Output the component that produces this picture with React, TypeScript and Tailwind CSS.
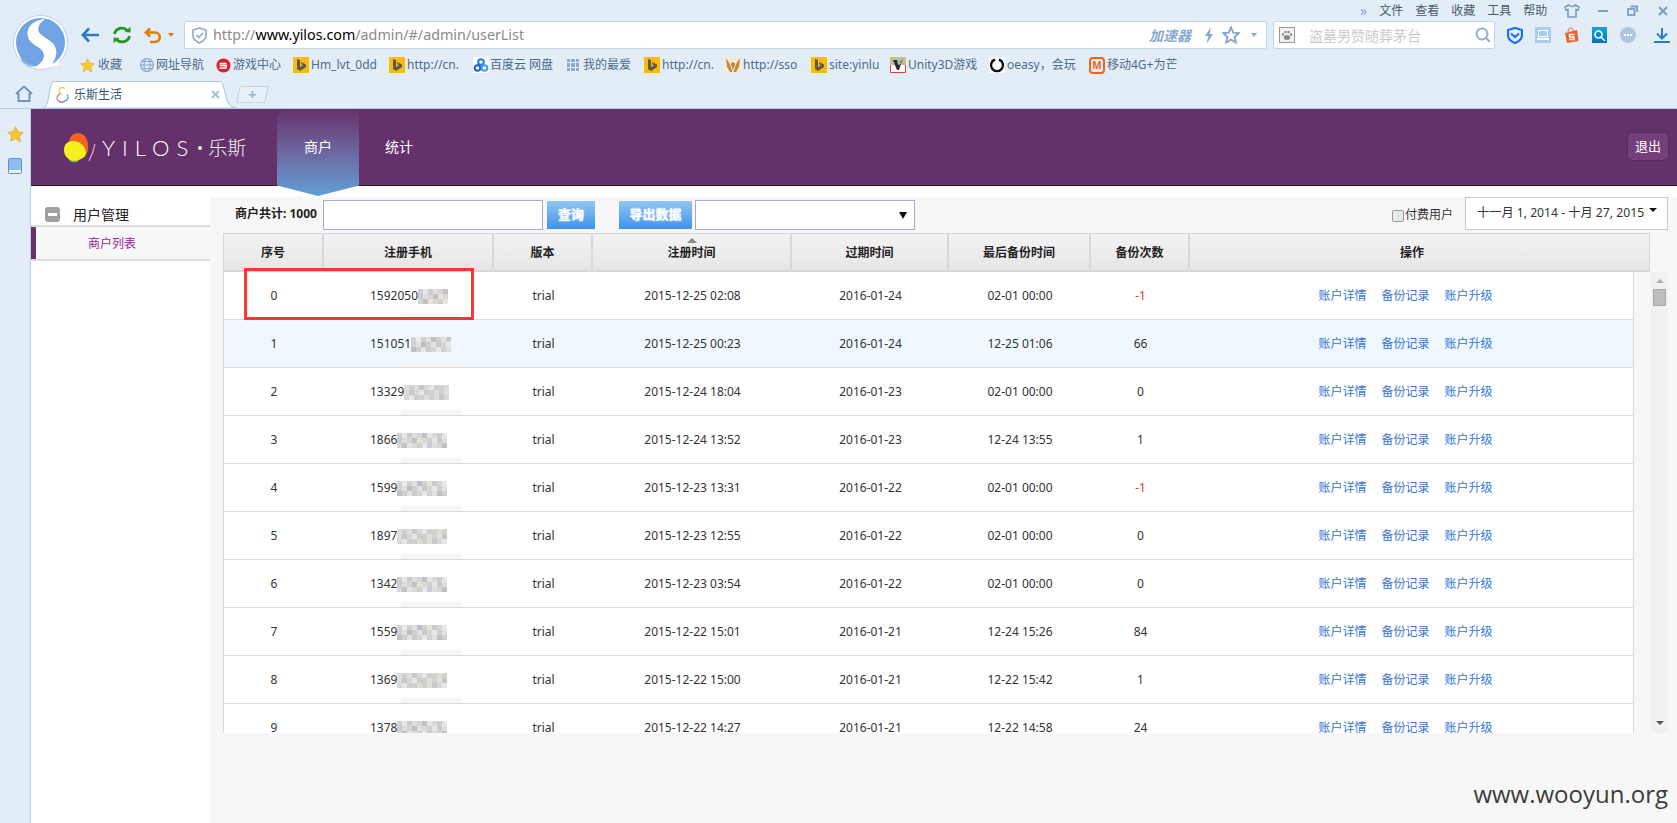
import React from "react";

const font = "font-['Noto_Sans','Noto_Sans_CJK_SC',sans-serif]";

const SLogo = () => (
  <svg width="55" height="55" viewBox="0 0 55 55">
    <circle cx="27.5" cy="27.5" r="27" fill="#fff" stroke="#b9d0ec" />
    <circle cx="27.5" cy="27.5" r="24.5" fill="#6fa3e4" />
    <path d="M35 3.5C24 4 15 9 14.5 18c-.5 9 8 12 13 16 4 3.500 4.500 8 1.500 12-2 3-5 5-8 6.500 13 3 25-3 25-3-1-1 0-12-1-14-2-8-13-12-18-17-3-3-2-8 2-12 2-2 4-3 7-4z" fill="#fff" />
    <path d="M6 38c3 7 8 11 15 14-3 0-8-2-11-5-2-2-3-6-4-9z" fill="#6fa3e4" />
    <path d="M43 13c5 5 8 11 7 19-1 9-5 14-11 17 5-7 6-14 1-21-3-5-4-10 3-15z" fill="#6fa3e4" />
  </svg>
);

const BingIcon = () => (
  <span className="flex h-[16px] w-[16px] shrink-0 items-center justify-center bg-[#ffb900]">
    <svg width="12" height="14" viewBox="0 0 12 14">
      <path d="M2 1l3 1v7l3-1.500-1.500-1L6 4l5 2.500v2.500L5 13l-3-2z" fill="#5a5a5a" />
    </svg>
  </span>
);

const StarIcon = ({ size = 15 }: { size?: number }) => (
  <svg width={size} height={size} viewBox="0 0 24 24" className="shrink-0">
    <path d="M12 1l3.400 7.200 7.600 1-5.600 5.400 1.500 7.900L12 18l-6.900 3.500 1.500-7.900L1 9.200l7.600-1z" fill="#fbc73a" stroke="#e8a320" strokeWidth="1" />
  </svg>
);

const GlobeIcon = () => (
  <svg width="16" height="16" viewBox="0 0 16 16" fill="none" stroke="#8fa8c8" strokeWidth="1.200" className="shrink-0">
    <circle cx="8" cy="8" r="6.500" />
    <ellipse cx="8" cy="8" rx="3" ry="6.500" />
    <path d="M1.500 8h13M2.500 4.500h11M2.500 11.500h11" />
  </svg>
);

const SogouIcon = () => (
  <svg width="15" height="15" viewBox="0 0 15 15" className="shrink-0">
    <circle cx="7.500" cy="7.500" r="7" fill="#d9202a" />
    <path d="M3.500 5.500h7M3.500 7.500h7l-.5 2.500h-6.500" fill="none" stroke="#fff" strokeWidth="1.400" />
  </svg>
);

const BaiduIcon = () => (
  <svg width="16" height="16" viewBox="0 0 16 16" fill="none" strokeWidth="2" className="shrink-0">
    <rect width="16" height="16" fill="#fff" />
    <circle cx="8" cy="5" r="2.800" stroke="#2c7be5" />
    <circle cx="4.500" cy="11" r="2.800" stroke="#1f5fc9" />
    <circle cx="11.500" cy="11" r="2.800" stroke="#38a0f0" />
  </svg>
);

const GridIcon = () => (
  <span className="grid h-[12px] w-[12px] shrink-0 grid-cols-3 gap-[1px]">
    {Array.from({ length: 9 }).map((_, i) => (
      <span key={i} className="bg-[#8fa8c8]" />
    ))}
  </span>
);

const FoxIcon = () => (
  <svg width="16" height="16" viewBox="0 0 16 16" className="shrink-0">
    <rect width="16" height="16" fill="#f4ead8" />
    <path d="M1 1l4 6 3-2 3 2 4-6-1 9-3 5H5L2 10z" fill="#c48a3c" />
    <path d="M5 6l3 9M11 6l-3 9" stroke="#f4ead8" strokeWidth="1" />
  </svg>
);

const UnityIcon = () => (
  <svg width="16" height="16" viewBox="0 0 16 16" className="shrink-0">
    <rect x=".5" y=".5" width="15" height="15" fill="#b9b9b9" stroke="#d8c84a" />
    <path d="M.5 8v7.500h15V8" fill="#fff" stroke="#e04040" />
    <path d="M3 3l4 10 2 0 2-6-3 1-1-5z" fill="#2a2a2a" />
    <path d="M9 5l4-3-1 5z" fill="#5aa83a" />
  </svg>
);

const OeasyIcon = () => (
  <svg width="16" height="16" viewBox="0 0 16 16" className="shrink-0">
    <rect width="16" height="16" fill="#fff" />
    <path d="M6 2.500A6 6 0 1 0 10 2.500" fill="none" stroke="#111" strokeWidth="2.400" />
  </svg>
);

const MangoIcon = () => (
  <span className="flex h-[17px] w-[16px] shrink-0 items-center justify-center rounded-[4px] border-2 border-[#f0631e] text-[10px] font-bold leading-none text-[#f0631e]">
    M
  </span>
);

const bookmarks = [
  { w: "w-[59px]", gap: "gap-[3px]", icon: <StarIcon />, text: "收藏" },
  { w: "w-[77px]", gap: "gap-[1px]", icon: <GlobeIcon />, text: "网址导航" },
  { w: "w-[77px]", gap: "gap-[2px]", icon: <SogouIcon />, text: "游戏中心" },
  { w: "w-[96px]", gap: "gap-[2px]", icon: <BingIcon />, text: "Hm_lvt_0dd" },
  { w: "w-[84px]", gap: "gap-[2px]", icon: <BingIcon />, text: "http://cn." },
  { w: "w-[94px]", gap: "gap-[1px]", icon: <BaiduIcon />, text: "百度云 网盘" },
  { w: "w-[77px]", gap: "gap-[4px]", icon: <GridIcon />, text: "我的最爱" },
  { w: "w-[81px]", gap: "gap-[2px]", icon: <BingIcon />, text: "http://cn." },
  { w: "w-[86px]", gap: "gap-[2px]", icon: <FoxIcon />, text: "http://sso" },
  { w: "w-[79px]", gap: "gap-[2px]", icon: <BingIcon />, text: "site:yinlu" },
  { w: "w-[99px]", gap: "gap-[2px]", icon: <UnityIcon />, text: "Unity3D游戏" },
  { w: "w-[100px]", gap: "gap-[2px]", icon: <OeasyIcon />, text: "oeasy，会玩" },
  { w: "w-[100px]", gap: "gap-[2px]", icon: <MangoIcon />, text: "移动4G+为芒" },
];

const rows = [
  { id: 0, phone: "1592050", mosaic: 0, reg: "2015-12-25 02:08", exp: "2016-01-24", last: "02-01 00:00", n: "-1" },
  { id: 1, phone: "151051", mosaic: 1, reg: "2015-12-25 00:23", exp: "2016-01-24", last: "12-25 01:06", n: "66" },
  { id: 2, phone: "13329", mosaic: 2, reg: "2015-12-24 18:04", exp: "2016-01-23", last: "02-01 00:00", n: "0" },
  { id: 3, phone: "1866", mosaic: 0, reg: "2015-12-24 13:52", exp: "2016-01-23", last: "12-24 13:55", n: "1" },
  { id: 4, phone: "1599", mosaic: 1, reg: "2015-12-23 13:31", exp: "2016-01-22", last: "02-01 00:00", n: "-1" },
  { id: 5, phone: "1897", mosaic: 2, reg: "2015-12-23 12:55", exp: "2016-01-22", last: "02-01 00:00", n: "0" },
  { id: 6, phone: "1342", mosaic: 0, reg: "2015-12-23 03:54", exp: "2016-01-22", last: "02-01 00:00", n: "0" },
  { id: 7, phone: "1559", mosaic: 1, reg: "2015-12-22 15:01", exp: "2016-01-21", last: "12-24 15:26", n: "84" },
  { id: 8, phone: "1369", mosaic: 2, reg: "2015-12-22 15:00", exp: "2016-01-21", last: "12-22 15:42", n: "1" },
  { id: 9, phone: "1378", mosaic: 0, reg: "2015-12-22 14:27", exp: "2016-01-21", last: "12-22 14:58", n: "24" },
];

const palettes = [
  ["#d2cfca", "#dcd9d5", "#e6e4e0", "#c4c1bc", "#d3d6da", "#dedede", "#c9ccd0", "#e6e6ea"],
  ["#d8d5d0", "#c8cbce", "#e4e2dd", "#d2cfcb", "#bcc0c4", "#dfe0e2", "#ced0d3", "#ebeae7"],
  ["#e0dcd8", "#d2d0cc", "#cbced2", "#e8e7e4", "#d8d8d6", "#c4c8cb", "#dcdee0", "#d4d1cd"],
];

// pixelated part of the phone number
const Mosaic = ({ p, count }: { p: number; count: number }) => (
  <span className="grid h-[15px] shrink-0 grid-flow-col grid-rows-3">
    {Array.from({ length: count * 3 }).map((_, i) => {
      const pal = palettes[p];
      return <span key={i} className="h-[5px] w-[5px]" style={{ background: pal[(i * 5 + (i % 3)) % pal.length] }} />;
    })}
  </span>
);

const cols = "grid grid-cols-[100px_170px_99px_199px_157px_142px_99px_444px]";

const heads = ["序号", "注册手机", "版本", "注册时间", "过期时间", "最后备份时间", "备份次数", "操作"];

const Row = ({ r }: { r: (typeof rows)[number] }) => {
  const count = Math.round((80 - r.phone.length * 7) / 5);
  return (
    <div className={`${cols} h-[48px] items-center border-b border-[#dcdcdc] pt-[1px] text-center ${r.id === 1 ? "bg-[#eff8ff]" : "bg-white"}`}>
      <div>{r.id}</div>
      <div className="relative flex h-full items-center justify-center">
        <span className="flex w-[78px] items-center">
          {r.phone}
          <Mosaic p={r.mosaic} count={count} />
        </span>
        <span className="absolute bottom-0 left-[77px] h-[5px] w-[60px] bg-[#f5f5f5]" />
      </div>
      <div>trial</div>
      <div>{r.reg}</div>
      <div>{r.exp}</div>
      <div>{r.last}</div>
      <div className={r.n === "-1" ? "text-[#d8401e]" : ""}>{r.n}</div>
      <div className="flex justify-center gap-[15px] pr-[13px] text-[#3574dc]">
        <a>账户详情</a>
        <a>备份记录</a>
        <a>账户升级</a>
      </div>
    </div>
  );
};

const BlueButton = ({ w, children }: { w: string; children: React.ReactNode }) => (
  <button className={`flex h-[28px] ${w} items-center justify-center bg-gradient-to-b from-[#8fc6f4] to-[#3c93ea] text-[13px] font-bold text-white [text-shadow:0_0_2px_#fff]`}>
    {children}
  </button>
);

export default function App() {
  return (
    <div className={`${font} flex h-[823px] w-[1677px] flex-col overflow-hidden bg-[#e3edf7] text-[12px] text-[#333]`}>
      {/* browser toolbar */}
      <div className="flex h-[80px]">
        <div className="w-[80px] shrink-0 pl-[13px] pt-[15px]">
          <SLogo />
        </div>
        <div className="flex flex-1 flex-col">
          <div className="flex h-[21px] items-center text-[#4a5a6a]">
            <span className="ml-[1280px] text-[14px] leading-none text-[#8aa6c6]">»</span>
            <div className="ml-[12px] flex gap-[12px]">
              <span>文件</span>
              <span>查看</span>
              <span>收藏</span>
              <span>工具</span>
              <span>帮助</span>
            </div>
            <svg width="16" height="14" viewBox="0 0 16 14" fill="none" stroke="#7f9dc0" strokeWidth="1.600" className="ml-[17px]">
              <path d="M5 1L1 3l1 3 2-.5V13h8V5.500l2 .5 1-3-4-2c-.5 2-5 2-6 0z" />
            </svg>
            <span className="ml-[18px] h-[2px] w-[10px] bg-[#7f9dc0]" />
            <svg width="11" height="11" viewBox="0 0 11 11" fill="none" stroke="#7f9dc0" strokeWidth="1.800" className="ml-[19px]">
              <rect x="1" y="4" width="6.500" height="6" />
              <path d="M3.500 1.500H10V7" />
            </svg>
            <svg width="10" height="10" viewBox="0 0 10 10" stroke="#7f9dc0" strokeWidth="2.200" className="ml-[20px]">
              <path d="M1 1l8 8M9 1l-8 8" />
            </svg>
          </div>

          <div className="flex h-[28px] items-center">
            <svg width="18" height="16" viewBox="0 0 18 16" fill="none" stroke="#2a7cc4" strokeWidth="2.600" className="ml-[1px]">
              <path d="M8 1.500L1.800 8 8 14.500M2 8h16" />
            </svg>
            <svg width="20" height="18" viewBox="0 0 20 18" fill="none" stroke="#229a22" strokeWidth="2.800" className="ml-[13px]">
              <path d="M2.500 8a7.500 7 0 0 1 13-3.500M17.500 10a7.500 7 0 0 1-13 3.500" />
              <path d="M12.500 6l6 .5V.8zM7.500 12l-6-.5v5.700z" fill="#229a22" stroke="none" />
            </svg>
            <svg width="17" height="17" viewBox="0 0 17 17" fill="none" stroke="#e07d0a" strokeWidth="2.600" className="ml-[12px]">
              <path d="M6 1.500L1.800 5.500 6 9.500M2 5.500h9a4.500 4.500 0 0 1 0 9.500H6" />
            </svg>
            <span className="ml-[7px] h-0 w-0 border-x-[3px] border-t-[4px] border-x-transparent border-t-[#e07d0a]" />
            <div className="ml-[10px] flex h-[28px] w-[1083px] items-center rounded-[2px] border border-[#c5d5e8] bg-white pl-[7px]">
              <svg width="15" height="17" viewBox="0 0 15 17" fill="none" stroke="#8fa8c8" strokeWidth="1.600">
                <path d="M7.500 1L14 3v5.500c0 3.500-3 6-6.500 7.500C4 14.500 1 12 1 8.500V3z" />
                <path d="M4.500 8l2.300 2.300L11 6" />
              </svg>
              <span className="ml-[6px] w-[314px] whitespace-nowrap text-[14.3px] text-[#8a8a8a]">
                http://<span className="text-black">www.yilos.com</span>/admin/#/admin/userList
              </span>
              <span className="ml-[622px] whitespace-nowrap text-[14px] font-bold italic text-[#88a9cf]">加速器</span>
              <svg width="10" height="17" viewBox="0 0 10 17" fill="#88a9cf" className="ml-[13px]">
                <path d="M7 0L1 9h3.500L2.500 17 9 7H5.500z" />
              </svg>
              <svg width="18" height="18" viewBox="0 0 24 24" fill="none" stroke="#88a9cf" strokeWidth="2.600" className="ml-[8px]">
                <path d="M12 2l3 6.800 7.300.8-5.400 5 1.500 7.400L12 18.300 5.600 22l1.500-7.400-5.400-5 7.300-.8z" />
              </svg>
              <span className="ml-[11px] h-0 w-0 border-x-[3px] border-t-[4px] border-x-transparent border-t-[#88a9cf]" />
            </div>
            <div className="ml-[6px] flex h-[28px] w-[222px] items-center rounded-[2px] border border-[#c5d5e8] bg-white pl-[5px]">
              <span className="flex h-[16px] w-[16px] items-center justify-center border border-[#9a9a9a] bg-[#f2f2f2]">
                <svg width="12" height="12" viewBox="0 0 12 12" fill="#8a8a8a">
                  <ellipse cx="6" cy="8.500" rx="3.200" ry="2.500" />
                  <circle cx="2" cy="5.500" r="1.200" />
                  <circle cx="4.500" cy="3" r="1.200" />
                  <circle cx="7.500" cy="3" r="1.200" />
                  <circle cx="10" cy="5.500" r="1.200" />
                </svg>
              </span>
              <span className="ml-[14px] whitespace-nowrap text-[14px] text-[#cbcbcb]">盗墓男赞随葬茅台</span>
              <svg width="16" height="16" viewBox="0 0 16 16" fill="none" stroke="#8fb0d6" strokeWidth="2" className="ml-[54px]">
                <circle cx="7" cy="7" r="5.500" />
                <path d="M11 11l4 4" />
              </svg>
            </div>
            <svg width="16" height="17" viewBox="0 0 16 17" fill="none" stroke="#1a6ff0" strokeWidth="2.200" className="ml-[12px]">
              <path d="M8 1L15 3v5c0 3.500-3 6.500-7 8-4-1.500-7-4.500-7-8V3z" />
              <path d="M4 6.500l4 3.500 4-3.500" />
            </svg>
            <span className="ml-[12px] flex h-[16px] w-[16px] flex-col items-center justify-center gap-[1px] bg-[#a8ccf5]">
              <span className="h-[7px] w-[10px] border border-white" />
              <span className="h-[2px] w-[12px] bg-white" />
            </span>
            <svg width="15" height="17" viewBox="0 0 15 17" className="ml-[13px]">
              <path d="M1 6l12-3 1.500 11L3 16z" fill="#f2602a" />
              <path d="M4 5c0-3 2-4.500 3.500-4 1.500.5 2 2 2 3" fill="none" stroke="#f2602a" />
              <path d="M10.500 7.500H5.500V10h4.500v2.500H5" fill="none" stroke="#fff" strokeWidth="1.400" />
            </svg>
            <span className="ml-[13px] flex h-[16px] w-[15px] items-center justify-center bg-gradient-to-b from-[#17a5d8] to-[#0a6fb8]">
              <svg width="13" height="13" viewBox="0 0 13 13" fill="none" stroke="#fff" strokeWidth="1.600">
                <circle cx="5.500" cy="5.500" r="3.500" />
                <path d="M8 8l4 4" />
              </svg>
            </span>
            <span className="ml-[13px] flex h-[16px] w-[16px] items-center justify-center gap-[1px] rounded-full bg-[#b0c6e2]">
              <span className="h-[2px] w-[2px] bg-white" />
              <span className="h-[2px] w-[2px] bg-white" />
              <span className="h-[2px] w-[2px] bg-white" />
            </span>
            <svg width="16" height="16" viewBox="0 0 16 16" fill="none" stroke="#2a7cc4" strokeWidth="2" className="ml-[18px]">
              <path d="M8 1v10M3 6.500l5 5 5-5M0 15h16" />
            </svg>
          </div>

          <div className="flex h-[31px] items-center pt-[1px] text-[#4f6b88]">
            {bookmarks.map((b) => (
              <div key={b.text + b.w} className={`flex ${b.w} ${b.gap} shrink-0 items-center whitespace-nowrap`}>
                {b.icon}
                <span>{b.text}</span>
              </div>
            ))}
          </div>
        </div>
      </div>

      {/* tab strip */}
      <div className="flex h-[29px] items-end border-b border-[#b4cbe4]">
        <svg width="18" height="17" viewBox="0 0 18 17" fill="none" stroke="#6f93bb" strokeWidth="2" className="mb-[6px] ml-[15px]">
          <path d="M1 9l8-7.500L17 9M3.500 8v8h11V8" />
        </svg>
        <div className="relative ml-[9px] flex h-[27px] w-[195px] items-center pl-[13px]">
          <svg width="195" height="27" viewBox="0 0 195 27" className="absolute left-0 top-0">
            <path d="M0 27c3 0 5-3 6-8l3-15c.5-2.500 2-3.500 4-3.500h164c2 0 3.500 1 4 3.500l4 15c1 4 4 8 10 8z" fill="#fff" stroke="#a9c3e0" />
          </svg>
          <svg width="15" height="17" viewBox="0 0 15 17" fill="none" strokeWidth="1.400" className="relative">
            <path d="M10 2.500C7 .5 4 2 4 4.500" stroke="#e2cf5a" />
            <path d="M4 4.500c0 2 1.500 3 3 4" stroke="#e2cf5a" />
            <path d="M5 8C2 9 1 12 3 14.500" stroke="#d88aa0" />
            <path d="M3 14.500c2 2 5 2 7 .5" stroke="#8a8a8a" />
            <path d="M10 15c3-1 4-4 2-6.500" stroke="#3ab6e8" />
          </svg>
          <span className="relative ml-[4px] text-[#35556f]">乐斯生活</span>
          <svg width="9" height="9" viewBox="0 0 9 9" stroke="#a9bfd8" strokeWidth="2" className="relative ml-[89px]">
            <path d="M1 1l7 7M8 1L1 8" />
          </svg>
        </div>
        <div className="mb-[5px] ml-[1px] flex h-[17px] w-[29px] skew-x-[-12deg] items-center justify-center rounded-[2px] border border-[#c3d5e9] bg-[#e8f0f9]">
          <span className="skew-x-[12deg] text-[15px] font-bold leading-none text-[#9ab5d2]">+</span>
        </div>
      </div>

      <div className="flex min-h-0 flex-1">
        {/* favourites strip */}
        <div className="flex w-[31px] shrink-0 flex-col items-center border-r border-[#b9cde4] pt-[17px]">
          <StarIcon size={17} />
          <span className="mt-[15px] flex h-[16px] w-[14px] flex-col justify-end rounded-[2px] border border-[#5f94cf] bg-[#8fbdec]">
            <span className="h-[3px] bg-[#e8f2fc]" />
          </span>
        </div>

        <div className="relative flex min-w-0 flex-1 flex-col bg-white">
          {/* site header */}
          <header className="flex h-[77px] shrink-0 items-start border-b border-[#2b1a2e] bg-[#65316b]">
            <div className="ml-[33px] mt-[23px] flex h-[32px] w-[213px] items-center">
              <svg width="32" height="31" viewBox="0 0 32 31" className="shrink-0">
                <path d="M5 10C5 4 9 0 14 0c6 0 9 5 10 11 .5 4 0 8-1.500 10z" fill="#f0641e" />
                <path d="M5 27c2 3 7 3 10 1l-4-4z" fill="#74b53a" />
                <path d="M0 17c0-6 4-9 9-9 6 0 12 4 13 11 .5 3-1 5-4 6.500-4 2.500-9 3-12 1.500-3-2-6-5-6-10z" fill="#f8f01e" />
                <path d="M31 11c-1 5-3 11-6 17" fill="none" stroke="#d89cc8" strokeWidth="1.300" />
              </svg>
              <span className="ml-[6px] font-['Lato',sans-serif] text-[22px] font-light leading-none tracking-[7px] text-white">YILOS</span>
              <span className="ml-[3px] h-[4px] w-[4px] shrink-0 rounded-full bg-white" />
              <span className="ml-[6px] whitespace-nowrap text-[19px] font-light leading-none text-[#f2f2f2]">乐斯</span>
            </div>
            <div className="relative z-10 flex h-[87px] w-[82px] shrink-0 justify-center bg-gradient-to-b from-[#65316b] to-[#5f9ed8] pt-[27px] text-[14px] leading-[22px] text-white [clip-path:polygon(0_0,100%_0,100%_88%,50%_100%,0_88%)]">
              商户
            </div>
            <div className="flex h-[76px] w-[80px] shrink-0 justify-center pt-[27px] text-[14px] leading-[22px] text-white">统计</div>
            <button className="ml-[1188px] mt-[23px] h-[29px] w-[42px] rounded-[6px] border border-[#5a2c60] bg-[#753f7c] text-[13px] text-white">退出</button>
          </header>

          <div className="flex min-h-0 flex-1">
            {/* side menu */}
            <aside className="w-[179px] shrink-0 bg-white pt-[19px]">
              <div className="flex h-[18px] items-center pl-[14px]">
                <span className="flex h-[15px] w-[15px] items-center justify-center rounded-[3px] bg-[#a0a0a0]">
                  <span className="h-[3px] w-[9px] bg-white" />
                </span>
                <span className="ml-[13px] text-[14px] text-[#222]">用户管理</span>
              </div>
              <div className="mt-[2px] flex h-[36px] items-center border-y-2 border-[#dcdcdc] bg-[#f8f8f8]">
                <span className="h-full w-[5px] bg-[#65316b]" />
                <span className="ml-[52px] pt-[2px] text-[#a020a0]">商户列表</span>
              </div>
            </aside>

            {/* main column */}
            <main className="mt-[11px] flex min-w-0 flex-1 flex-col bg-[#f7f7f7]">
              <div className="flex h-[36px] shrink-0 items-start">
                <span className="ml-[25px] mt-[8px] w-[88px] whitespace-nowrap text-[12px] font-bold text-[#222]">商户共计: 1000</span>
                <input className="mt-[3px] h-[30px] w-[220px] border border-[#a9abc4] bg-white" />
                <div className="ml-[4px] mt-[4px]">
                  <BlueButton w="w-[48px]">查询</BlueButton>
                </div>
                <div className="ml-[24px] mt-[4px]">
                  <BlueButton w="w-[73px]">导出数据</BlueButton>
                </div>
                <div className="ml-[3px] mt-[3px] flex h-[30px] w-[220px] items-center justify-end border border-[#a9abc4] bg-white pr-[7px]">
                  <span className="h-0 w-0 border-x-[4px] border-t-[7px] border-x-transparent border-t-[#111]" />
                </div>
                <span className="ml-[477px] mt-[13px] h-[12px] w-[12px] rounded-[2px] border border-[#999] bg-[#e8e8e8]" />
                <span className="ml-[1px] mt-[9px] whitespace-nowrap text-[#333]">付费用户</span>
                <div className="relative ml-[12px] flex h-[33px] w-[203px] items-center whitespace-nowrap border border-[#c8c8c8] bg-white pl-[11px] text-[12.2px] text-[#333]">
                  十一月 1, 2014 - 十月 27, 2015
                  <span className="absolute right-[10px] top-[10px] h-0 w-0 border-x-[4px] border-b-0 border-t-[4px] border-x-transparent border-t-[#111]" />
                </div>
              </div>

              <div className="relative ml-[13px] w-[1427px] shrink-0">
                {/* table head */}
                <div className={`${cols} h-[39px] w-[1427px] items-center border border-b-2 border-[#d8d8d8] bg-gradient-to-b from-[#f3f3f3] to-[#e6e6e6] pr-[16px] text-center font-bold text-[#222]`}>
                  {heads.map((h, i) => (
                    <div key={h} className={`relative flex h-full items-center justify-center pt-[2px] ${i < 7 ? "border-r-2 border-[#d8d8d8]" : ""}`}>
                      {h === "注册时间" && (
                        <span className="absolute left-1/2 top-[4px] h-0 w-0 -translate-x-1/2 border-x-[5px] border-b-[5px] border-x-transparent border-b-[#8a8a8a]" />
                      )}
                      {h}
                    </div>
                  ))}
                </div>

                {/* table body and its scrollbar */}
                <div className="flex h-[461px]">
                  <div className="h-full w-[1411px] shrink-0 overflow-hidden border-x border-[#d8d8d8] bg-white">
                    {rows.map((r) => (
                      <Row key={r.id} r={r} />
                    ))}
                  </div>
                  <div className="ml-[17px] flex h-full w-[17px] shrink-0 flex-col items-center bg-[#f1f1f1] pt-[7px]">
                    <span className="h-0 w-0 border-x-[4px] border-b-[4px] border-x-transparent border-b-[#b0b0b0]" />
                    <span className="mt-[6px] h-[17px] w-[13px] border border-[#a8a8a8] bg-[#bdbdbd]" />
                    <span className="mt-auto mb-[8px] h-0 w-0 border-x-[4px] border-t-[4px] border-x-transparent border-t-[#555]" />
                  </div>
                </div>

                {/* annotation around the first row */}
                <div className="absolute left-[21px] top-[35px] h-[52px] w-[230px] border-[3px] border-[#ff3535]" />
              </div>
            </main>
          </div>

          <span className="absolute bottom-[17px] right-[9px] font-['Open_Sans',sans-serif] text-[24px] leading-none text-[#3c3c3c]">www.wooyun.org</span>
        </div>
      </div>
    </div>
  );
}
